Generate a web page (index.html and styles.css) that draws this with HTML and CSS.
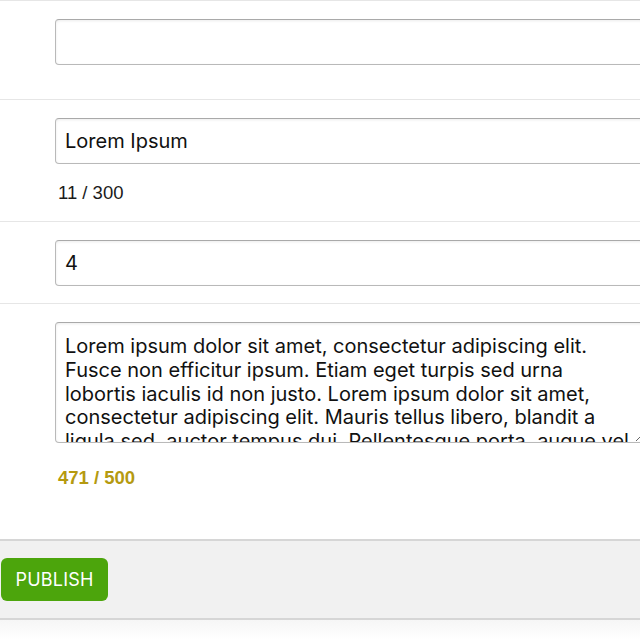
FILE: index.html
```html
<!DOCTYPE html>
<html lang="en">
<head>
<meta charset="utf-8">
<title>Edit entry</title>
<link rel="stylesheet" href="styles.css">
</head>
<body>
<form class="form">
  <div class="row row-first">
    <input class="field" type="text" value="">
  </div>
  <div class="row">
    <input class="field" type="text" value="Lorem Ipsum">
    <div class="counter">11 / 300</div>
  </div>
  <div class="row">
    <input class="field" type="text" value="4">
  </div>
  <div class="row row-last">
    <textarea class="field area">Lorem ipsum dolor sit amet, consectetur adipiscing elit. Fusce non efficitur ipsum. Etiam eget turpis sed urna lobortis iaculis id non justo. Lorem ipsum dolor sit amet, consectetur adipiscing elit. Mauris tellus libero, blandit a ligula sed, auctor tempus dui. Pellentesque porta, augue vel lacinia pretium, nunc lacus tincidunt mi, a dictum orci arcu eget nisi. Aliquam erat volutpat. Sed non libero nec lectus sodales feugiat. Cras consequat, urna in pellentesque.</textarea>
    <div class="counter counter-warn">471 / 500</div>
  </div>
  <div class="footer">
    <button class="publish" type="button">PUBLISH</button>
  </div>
  <div class="under"></div>
</form>
</body>
</html>
```
FILE: styles.css
```css
html, body {
  margin: 0;
  padding: 0;
  background: #ffffff;
  overflow: hidden;
}
body {
  font-family: Inter, "Liberation Sans", sans-serif;
  color: #111;
}
.form {
  display: flex;
  flex-direction: column;
}
.row {
  border-top: 1px solid #e6e6e6;
  padding: 18px 0 17px 55px;
  display: flex;
  flex-direction: column;
  align-items: flex-start;
}
.row-first {
  padding-bottom: 34px;
}
.row-last {
  padding-bottom: 50px;
}
.field {
  box-sizing: border-box;
  width: 590px;
  flex: none;
  height: 46px;
  margin: 0;
  padding: 0 9px;
  border: 1px solid #b9b9b9;
  border-top-color: #a9a9a9;
  border-radius: 4px;
  box-shadow: inset 0 1px 3px rgba(0, 0, 0, 0.08);
  background: #fff;
  font-family: Inter, "Liberation Sans", sans-serif;
  font-size: 20px;
  color: #111;
  outline: none;
}
.area {
  height: 121px;
  padding: 12px 9px 9px;
  line-height: 23.8px;
  resize: vertical;
  overflow: hidden;
}
.counter {
  margin: 17px 0 0 3px;
  font-family: "Liberation Sans", Arial, sans-serif;
  font-size: 18.5px;
  line-height: 23px;
  color: #1a1a1a;
}
.counter-warn {
  margin-top: 23px;
  font-weight: bold;
  color: #b59a10;
}
.footer {
  border-top: 2px solid #d6d6d6;
  border-bottom: 2px solid #d6d6d6;
  background: #f1f1f1;
  padding: 17px 0 17px 1px;
  display: flex;
}
.publish {
  height: 43px;
  width: 107px;
  border: none;
  border-radius: 6px;
  background: #4ca50c;
  color: #fff;
  font-family: Inter, "Liberation Sans", sans-serif;
  font-size: 18px;
  letter-spacing: 0.2px;
  padding: 0;
}
.under {
  height: 20px;
  background: linear-gradient(#f6f6f6, #ffffff);
}
```
